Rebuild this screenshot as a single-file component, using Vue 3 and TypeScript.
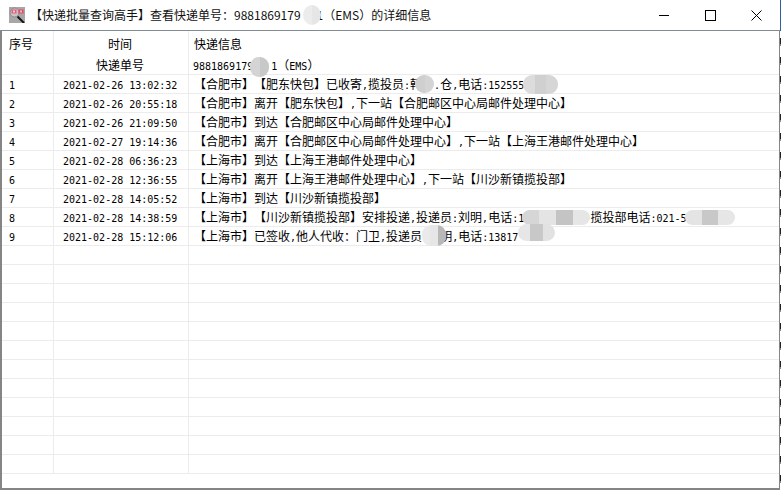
<script setup lang="ts">
interface Row { no: string; time: string; info: string }

const blank = (n: number) => '\u00a0'.repeat(n)

const records: Row[] = [
  { no: '1', time: '2021-02-26 13:02:32', info: `【合肥市】【肥东快包】已收寄,揽投员:韩　.仓,电话:152555` },
  { no: '2', time: '2021-02-26 20:55:18', info: '【合肥市】离开【肥东快包】,下一站【合肥邮区中心局邮件处理中心】' },
  { no: '3', time: '2021-02-26 21:09:50', info: '【合肥市】到达【合肥邮区中心局邮件处理中心】' },
  { no: '4', time: '2021-02-27 19:14:36', info: '【合肥市】离开【合肥邮区中心局邮件处理中心】,下一站【上海王港邮件处理中心】' },
  { no: '5', time: '2021-02-28 06:36:23', info: '【上海市】到达【上海王港邮件处理中心】' },
  { no: '6', time: '2021-02-28 12:36:55', info: '【上海市】离开【上海王港邮件处理中心】,下一站【川沙新镇揽投部】' },
  { no: '7', time: '2021-02-28 14:05:52', info: '【上海市】到达【川沙新镇揽投部】' },
  { no: '8', time: '2021-02-28 14:38:59', info: `【上海市】【川沙新镇揽投部】安排投递,投递员:刘明,电话:1${blank(11)}揽投部电话:021-5` },
  { no: '9', time: '2021-02-28 15:12:06', info: `【上海市】已签收,他人代收：门卫,投递员　${blank(1)}明,电话:13817` },
]

const rows: Row[] = [
  ...records,
  ...Array.from({ length: 12 }, () => ({ no: '', time: '', info: '' })),
]

interface Segment { text: string; latin: boolean }
function segments(text: string): Segment[] {
  return text
    .split(/([\x20-\x7e\u00a0]+)/)
    .filter(Boolean)
    .map((s) => ({ text: s, latin: /^[\x20-\x7e\u00a0]/.test(s) }))
}

interface Blob { cls: string; box: string; bands: string[] }
const blobs: Blob[] = [
  { cls: 'title-blob', box: 'left:303px;top:5px;width:18px;height:20px;', bands: ['#ececec', '#e6e6e6'] },
  { cls: '', box: 'left:250px;top:57px;width:19px;height:20px;', bands: ['#d4d4d4', '#c8c8c8'] },
  { cls: '', box: 'left:415px;top:75px;width:19px;height:18px;', bands: ['#cfcfcf', '#d4d4d4'] },
  { cls: '', box: 'left:523px;top:75px;width:35px;height:19px;', bands: ['#dcdcdc', '#d0d0d0', '#d6d6d6'] },
  { cls: '', box: 'left:522px;top:210px;width:68px;height:15px;', bands: ['#d6d6d6', '#e4e4e4', '#c4c4c4', '#e6e6e6'] },
  { cls: '', box: 'left:685px;top:210px;width:50px;height:15px;', bands: ['#e4e4e4', '#c8c8c8', '#e6e6e6'] },
  { cls: '', box: 'left:422px;top:225px;width:24px;height:21px;', bands: ['#eaeaea', '#e6e6e6', '#b8b8b8'] },
  { cls: '', box: 'left:518px;top:224px;width:37px;height:17px;', bands: ['#e6e6e6', '#c8c8c8', '#e2e2e2'] },
]
</script>

<template>
  <div class="window">
    <header class="titlebar">
      <svg class="app-icon" width="16" height="16" viewBox="0 0 16 16">
        <rect width="16" height="16" fill="#a8a6a6" />
        <circle cx="5.5" cy="5.5" r="4.5" fill="#c9c4c6" stroke="#8f8b8d" />
        <rect x="2.5" y="2.5" width="5" height="4" fill="#e65a86" />
        <rect x="9.5" y="2.5" width="5" height="4" fill="#e4486c" />
        <rect x="4" y="3.5" width="2" height="2" fill="#f6d2a8" />
        <rect x="11" y="3.5" width="2" height="2" fill="#f4c0a0" />
        <path d="M8.5 9.5 L15 16" stroke="#161616" stroke-width="2" />
      </svg>
      <span class="title-text">【快递批量查询高手】查看快递单号：9881869179<i class="gap"></i>1（EMS）的详细信息</span>
      <div class="controls">
        <svg width="11" height="11" viewBox="0 0 11 11"><path d="M0 5.5H10" stroke="#000" /></svg>
        <svg width="11" height="11" viewBox="0 0 11 11"><rect x="0.5" y="0.5" width="10" height="10" fill="none" stroke="#000" /></svg>
        <svg width="11" height="11" viewBox="0 0 11 11"><path d="M0.5 0.5L10.5 10.5M10.5 0.5L0.5 10.5" stroke="#000" /></svg>
      </div>
    </header>

    <main class="table">
      <div class="row head-top">
        <div class="cell">序号</div>
        <div class="cell center">时间</div>
        <div class="cell info-head">快递信息</div>
      </div>
      <div class="row head-sub">
        <div class="cell"></div>
        <div class="cell center">快递单号</div>
        <div class="cell tracking">
          <span class="latin">9881869179{{ blank(3) }}1</span>（<span class="latin">EMS</span>）
        </div>
      </div>
      <div v-for="(r, i) in rows" :key="i" class="row">
        <div class="cell"><span class="latin">{{ r.no }}</span></div>
        <div class="cell time"><span class="latin">{{ r.time }}</span></div>
        <div class="cell info">
          <template v-for="(s, j) in segments(r.info)" :key="j">
            <span v-if="s.latin" class="latin">{{ s.text }}</span>
            <template v-else>{{ s.text }}</template>
          </template>
        </div>
      </div>
    </main>

    <div
      v-for="(b, i) in blobs"
      :key="'blob' + i"
      class="blob"
      :class="b.cls"
      :style="b.box"
    >
      <i v-for="(c, k) in b.bands" :key="k" :style="{ background: c }"></i>
    </div>
  </div>
</template>

<style scoped>
.window {
  position: relative;
  width: 781px;
  height: 490px;
  display: flex;
  flex-direction: column;
  overflow: hidden;
  box-sizing: border-box;
  padding: 0 1px 0 0;
  background-color: #fff;
  background-image:
    linear-gradient(to bottom, #2f5f9e 0 31px, transparent 31px),
    repeating-linear-gradient(to bottom, #222 0 6px, #8a8a8a 6px 8px, #fff 8px 19px);
  background-position: right top;
  background-size: 1px 100%;
  background-repeat: no-repeat;
  font-family: "Noto Sans CJK SC", "Liberation Sans", sans-serif;
  font-size: 12px;
  color: #000;
  text-spacing-trim: space-all;
}

.titlebar {
  flex: none;
  height: 30px;
  display: flex;
  align-items: center;
  background: #fff;
  border-bottom: 1px solid #808b92;
}

.app-icon {
  margin-left: 9px;
  flex: none;
}

.title-text {
  margin-left: 5px;
  white-space: pre;
  line-height: 30px;
  color: #111;
}

.gap {
  display: inline-block;
  width: 16px;
}

.controls {
  margin-left: auto;
  margin-right: 18px;
  display: flex;
  gap: 35px;
}

.controls svg {
  display: block;
}

.table {
  flex: 1;
  min-height: 0;
  overflow: hidden;
  background: #fff;
  border-left: 2px solid #858585;
  border-right: 1px solid #858585;
  border-bottom: 2px solid #858585;
}

.row {
  display: grid;
  grid-template-columns: 52px 135px 1fr;
  height: 19px;
  box-sizing: border-box;
  border-bottom: 1px solid #ececec;
}

.head-top {
  height: 25px;
  border-bottom: none;
}

.cell {
  box-sizing: border-box;
  border-right: 1px solid #ececec;
  white-space: pre;
  line-height: 18px;
  padding-left: 7px;
  overflow: visible;
}

.cell:last-child {
  border-right: none;
}

.head-top .cell {
  line-height: 25px;
}

.center {
  text-align: center;
  padding-left: 0;
  padding-right: 2px;
}

.time {
  padding-left: 9px;
}

.info,
.info-head {
  padding-left: 5px;
}

.tracking {
  padding-left: 4px;
}

.latin {
  font-family: "DejaVu Sans Mono", "Liberation Mono", monospace;
  font-size: 10px;
}

.blob {
  position: absolute;
  display: flex;
  overflow: hidden;
  border-radius: 9px;
}

.blob i {
  flex: 1;
}

.title-blob {
  border-radius: 50%;
}
</style>
